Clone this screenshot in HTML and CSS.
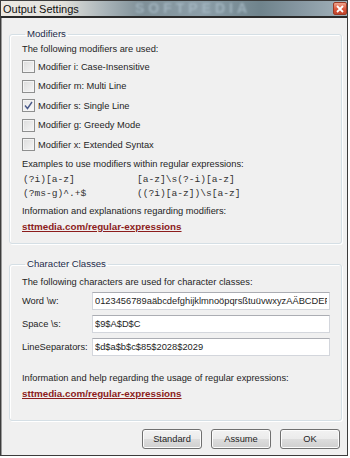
FILE: index.html
```html
<!DOCTYPE html>
<html lang="en">
  <head>
    <meta charset="UTF-8" />
    <meta name="viewport" content="width=device-width, initial-scale=1.0" />
    <title>Output Settings</title>
    <link rel="stylesheet" href="styles.css">
  </head>
  <body>
    <div class="window">
      <div class="titlebar">
        <span class="title">Output Settings</span>
        <span class="watermark">SOFTPEDIA</span>
        <span class="close">
          <svg width="8" height="8" viewBox="0 0 8 8">
            <path d="M1 1 L7 7 M7 1 L1 7" stroke="#fff" stroke-width="1.8" />
          </svg>
        </span>
      </div>
      <div class="content">
        <fieldset class="group first">
          <legend>Modifiers</legend>
          <p class="line">The following modifiers are used:</p>
          <div class="checks">
            <div class="check"><span class="box"></span>Modifier i: Case-Insensitive</div>
            <div class="check"><span class="box"></span>Modifier m: Multi Line</div>
            <div class="check"><span class="box checked">
              <svg width="9" height="9" viewBox="0 0 9 9">
                <path d="M1 4.5 L3.5 7.5 L8 1" fill="none" stroke="#4a5a8a" stroke-width="1.4" />
              </svg>
            </span>Modifier s: Single Line</div>
            <div class="check"><span class="box"></span>Modifier g: Greedy Mode</div>
            <div class="check"><span class="box"></span>Modifier x: Extended Syntax</div>
          </div>
          <p class="line examples">Examples to use modifiers within regular expressions:</p>
          <div class="code">
            <span>(?i)[a-z]</span><span>[a-z]\s(?-i)[a-z]</span>
            <span>(?ms-g)^.+$</span><span>((?i)[a-z])\s[a-z]</span>
          </div>
          <p class="line info">Information and explanations regarding modifiers:</p>
          <a class="link" href="#">sttmedia.com/regular-expressions</a>
        </fieldset>

        <fieldset class="group second">
          <legend>Character Classes</legend>
          <p class="line intro">The following characters are used for character classes:</p>
          <div class="fields">
            <label class="field"><span>Word \w:</span><input type="text" value="0123456789aäbcdefghijklmnoöpqrsßtuüvwxyzAÄBCDEFGHIJ"></label>
            <label class="field"><span>Space \s:</span><input type="text" value="$9$A$D$C"></label>
            <label class="field"><span>LineSeparators:</span><input type="text" value="$d$a$b$c$85$2028$2029"></label>
          </div>
          <p class="line info2">Information and help regarding the usage of regular expressions:</p>
          <a class="link" href="#">sttmedia.com/regular-expressions</a>
        </fieldset>

        <div class="buttons">
          <button>Standard</button>
          <button>Assume</button>
          <button>OK</button>
        </div>
      </div>
    </div>
  </body>
</html>
```

FILE: styles.css
```css
body {
  margin: 0;
  background-color: #fff;
  font-family: "Liberation Sans", Arial, sans-serif;
  font-size: 9.3px;
  color: #1e1e1e;
}
.window {
  width: 346px;
  height: 454px;
  border: 1px solid #3c3c3c;
  box-shadow: inset 1px 0 0 #9a9a9a;
  background-color: #f0f0f0;
  overflow: hidden;
}
.titlebar {
  position: relative;
  height: 15px;
  border-bottom: 2px solid #2a2a2a;
  background: linear-gradient(to right, #ece9e3 0px, #e2e1dc 60px, #a8b3b8 105px, #7e8f97 140px, #8c9ea8 200px, #6f838c 260px, #8798a2 300px, #a3b2ba 346px);
  display: flex;
  align-items: center;
  overflow: hidden;
}
.title {
  padding-left: 2px;
  font-size: 11px;
  color: #111;
  position: relative;
  z-index: 1;
}
.watermark {
  position: absolute;
  left: 134px;
  top: 0;
  line-height: 15px;
  font-size: 14px;
  font-weight: bold;
  letter-spacing: 4px;
  color: #a9bcc7;
  filter: blur(0.8px);
  opacity: 0.8;
}
.close {
  position: absolute;
  right: 0;
  top: 1px;
  width: 12px;
  height: 11px;
  border: 1px solid #9c3b25;
  border-radius: 2px;
  background: linear-gradient(#f0a58e, #d9553a 55%, #c2432a);
  display: flex;
  align-items: center;
  justify-content: center;
}
.content {
  padding: 9px 5px 0 8px;
}
.group {
  margin: 0;
  padding: 0 8px 8px 12px;
  border: 1px solid #d5dfe5;
  border-radius: 3px;
  box-shadow: inset 1px 1px 0 #fff, 1px 1px 0 #fff;
}
.group legend {
  padding: 0 2px;
  margin-left: 3px;
  line-height: 14px;
  font-size: 9.6px;
  color: #1c2b4a;
}
.line {
  margin: 0;
  line-height: 16px;
  white-space: nowrap;
}
.checks {
  display: flex;
  flex-direction: column;
}
.check {
  height: 19.5px;
  display: flex;
  align-items: center;
  gap: 3px;
}
.box {
  width: 11px;
  height: 11px;
  border: 1px solid #8e8f8f;
  background: linear-gradient(135deg, #dcdcdc, #f6f6f6);
  box-shadow: inset 0 0 0 1px #f4f4f4;
  display: flex;
  align-items: center;
  justify-content: center;
}
.box.checked {
  background: linear-gradient(135deg, #e6e6e6, #fafafa);
}
.examples {
  margin-top: 1.5px;
}
.code {
  margin-top: 1px;
  display: grid;
  grid-template-columns: 114px auto;
  font-family: "Liberation Mono", "Courier New", monospace;
  font-size: 9.6px;
  line-height: 14px;
  color: #333;
  padding-left: 1px;
}
.info {
  margin-top: 2px;
}
.link {
  display: block;
  line-height: 16px;
  font-weight: bold;
  font-size: 9.8px;
  color: #8c1c1c;
  text-decoration: underline;
}
.second {
  margin-top: 13px;
  padding-bottom: 18px;
}
.intro {
  margin-top: 3px;
}
.fields {
  margin-top: 2px;
  display: flex;
  flex-direction: column;
  gap: 5px;
}
.field {
  display: flex;
  align-items: center;
}
.field span {
  width: 70px;
}
.field input {
  width: 238px;
  height: 18px;
  box-sizing: border-box;
  border: 1px solid #d3d6dc;
  border-top-color: #abadb3;
  background-color: #fff;
  padding: 0 2px;
  font-family: "Liberation Sans", Arial, sans-serif;
  font-size: 9.3px;
  color: #1e1e1e;
  outline: none;
}
.info2 {
  margin-top: 14px;
}
.buttons {
  margin-top: 8px;
  display: flex;
  justify-content: flex-end;
  gap: 9px;
  padding-right: 2px;
}
.buttons button {
  width: 60px;
  height: 20px;
  border: 1px solid #707070;
  border-radius: 3px;
  background: linear-gradient(#f2f2f2 0%, #ebebeb 50%, #dddddd 51%, #cfcfcf 100%);
  box-shadow: inset 0 0 0 1px #fcfcfc;
  font-family: "Liberation Sans", Arial, sans-serif;
  font-size: 9.3px;
  color: #1e1e1e;
  padding: 0;
}
```
